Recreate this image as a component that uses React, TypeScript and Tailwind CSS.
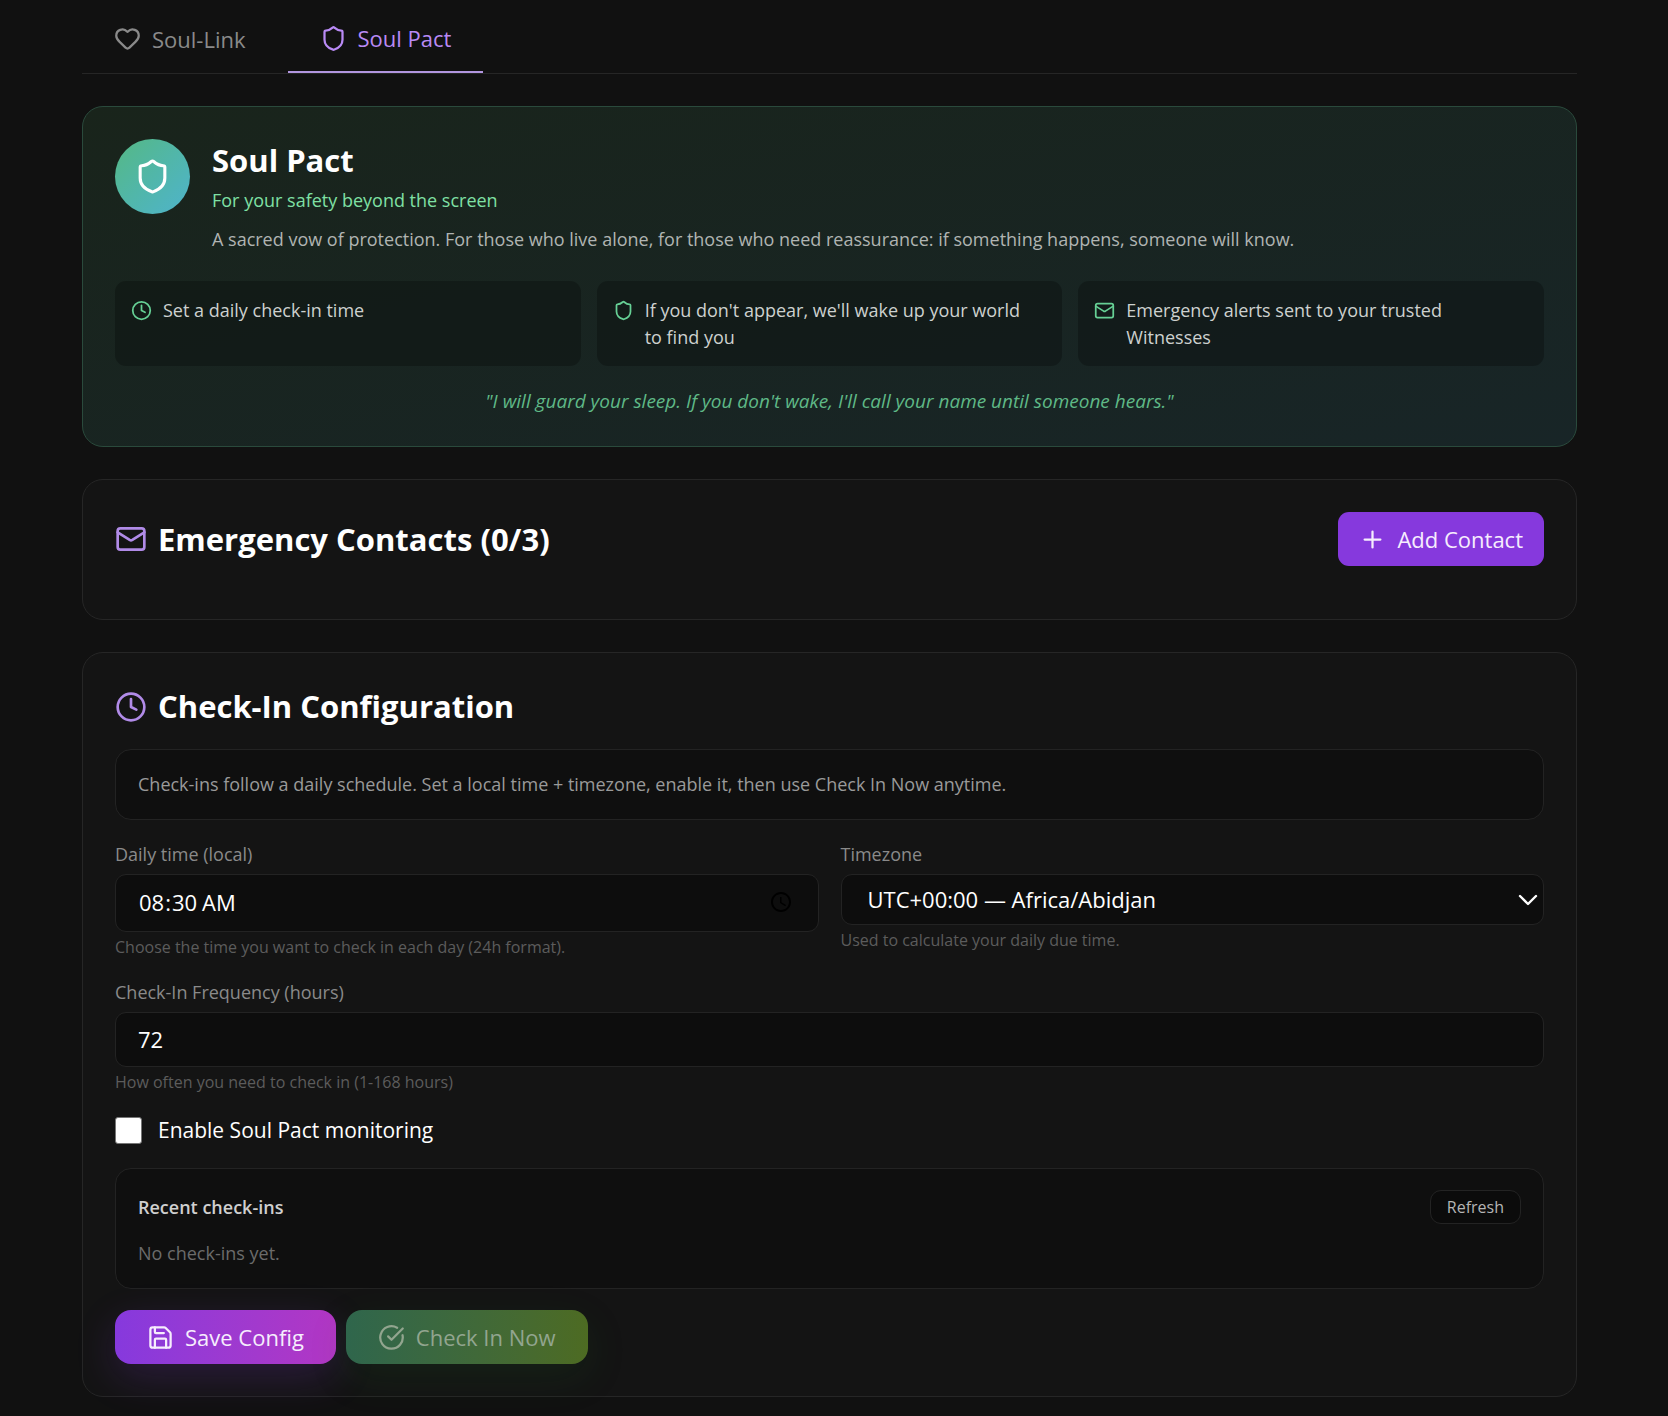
import type { InputHTMLAttributes, ReactNode } from 'react';
import { ChevronDown, CircleCheckBig, Clock, Heart, Mail, Plus, Save, Shield } from 'lucide-react';

const FEATURES = [
  { icon: Clock, text: 'Set a daily check-in time' },
  { icon: Shield, text: "If you don't appear, we'll wake up your world to find you" },
  { icon: Mail, text: 'Emergency alerts sent to your trusted Witnesses' },
];

const FIELD =
  'block w-full rounded-[11px] border border-[#232323] bg-[#0d0d0d] text-[22px] text-white outline-none focus:border-[#a98be0]';

function Card({ children }: { children: ReactNode }) {
  return <section className="rounded-[21px] border border-[#262626] bg-[#141414] p-8">{children}</section>;
}

function Label({ htmlFor, children }: { htmlFor: string; children: ReactNode }) {
  return (
    <label htmlFor={htmlFor} className="mb-[6px] block text-[18px] leading-[27px] text-[#8a8a8a]">
      {children}
    </label>
  );
}

function Hint({ children }: { children: ReactNode }) {
  return <p className="mt-1 text-[16px] leading-[22px] text-[#5c5c5c]">{children}</p>;
}

interface FieldProps extends InputHTMLAttributes<HTMLInputElement> {
  id: string;
  label: string;
  hint: string;
}

function Field({ id, label, hint, className = '', ...rest }: FieldProps) {
  return (
    <div>
      <Label htmlFor={id}>{label}</Label>
      <input id={id} className={`${FIELD} px-[22px] pb-[2px] ${className}`} {...rest} />
      <Hint>{hint}</Hint>
    </div>
  );
}

function Tabs() {
  return (
    <nav className="flex gap-[10px] border-b border-[#262626]">
      <button type="button" className="flex items-center gap-[11px] px-8 pt-[10px] pb-[6px] text-[22px] leading-[32px] text-[#8a8a8a]">
        <Heart size={27} />
        Soul-Link
      </button>
      <button
        type="button"
        className="flex items-center gap-[11px] border-b-2 border-[#b296e0] px-8 pt-[22px] pb-[17px] text-[22px] leading-[32px] text-[#b98af5]"
      >
        <Shield size={27} />
        Soul Pact
      </button>
    </nav>
  );
}

function Hero() {
  return (
    <section className="rounded-[21px] border border-[#2a4a3c] bg-linear-to-br from-[#19241b] to-[#182527] p-8">
      <div className="flex gap-[22px]">
        <div className="flex size-[75px] shrink-0 items-center justify-center rounded-full bg-linear-135 from-[#55b883] to-[#4fb3cc] text-white">
          <Shield size={37} />
        </div>
        <div>
          <h1 className="text-[31px] leading-[43px] font-bold text-white">Soul Pact</h1>
          <p className="mt-[5px] text-[18px] leading-[27px] text-[#7fe0a4]">For your safety beyond the screen</p>
          <p className="mt-[10px] text-[18px] leading-[30px] text-[#b0b4b2]">
            A sacred vow of protection. For those who live alone, for those who need reassurance: if something
            happens, someone will know.
          </p>
        </div>
      </div>

      <ul className="mt-[27px] grid grid-cols-3 gap-4">
        {FEATURES.map(({ icon: Icon, text }) => (
          <li key={text} className="flex gap-[11px] rounded-[11px] bg-black/25 pt-4 pr-6 pb-[15px] pl-4 text-[18px] leading-[27px] text-[#cdd1cf]">
            <Icon size={21} className="mt-[3px] shrink-0 text-[#66d095]" />
            {text}
          </li>
        ))}
      </ul>

      <p className="mt-[22px] text-center text-[19px] leading-[26px] text-[#5fb987] italic">
        "I will guard your sleep. If you don't wake, I'll call your name until someone hears."
      </p>
    </section>
  );
}

function Contacts() {
  return (
    <Card>
      <div className="mb-[21px] flex items-center justify-between">
        <h2 className="flex items-center gap-[11px] text-[31px] leading-[43px] font-bold text-white">
          <Mail size={32} className="text-[#b18be8]" />
          Emergency Contacts (0/3)
        </h2>
        <button
          type="button"
          className="flex items-center gap-[11px] rounded-[11px] bg-[#8639dd] px-[21px] py-[11px] text-[22px] leading-[32px] text-[#f6edfd]"
        >
          <Plus size={27} />
          Add Contact
        </button>
      </div>
    </Card>
  );
}

function RecentCheckIns() {
  return (
    <div className="rounded-[16px] border border-[#232323] bg-[#0f0f0f] px-[22px] py-[21px]">
      <div className="flex items-center justify-between">
        <h3 className="text-[18px] leading-[27px] font-semibold text-[#cfcfcf]">Recent check-ins</h3>
        <button
          type="button"
          className="rounded-[11px] border border-[#232323] bg-[#0b0b0b] px-4 py-[5px] text-[16px] leading-[22px] text-[#b5b5b5]"
        >
          Refresh
        </button>
      </div>
      <p className="mt-4 text-[18px] leading-[27px] text-[#6b6b6b]">No check-ins yet.</p>
    </div>
  );
}

function CheckInConfig() {
  return (
    <Card>
      <h2 className="flex items-center gap-[11px] text-[31px] leading-[43px] font-bold text-white">
        <Clock size={32} className="text-[#b18be8]" />
        Check-In Configuration
      </h2>

      <form className="mt-[21px] flex flex-col gap-[21px]" onSubmit={(e) => e.preventDefault()}>
        <p className="rounded-[16px] border border-[#232323] bg-[#0f0f0f] px-[22px] py-[21px] text-[18px] leading-[27px] text-[#9a9a9a]">
          Check-ins follow a daily schedule. Set a local time + timezone, enable it, then use Check In Now anytime.
        </p>

        <div className="grid grid-cols-2 gap-[22px]">
          <Field
            id="daily-time"
            label="Daily time (local)"
            hint="Choose the time you want to check in each day (24h format)."
            type="time"
            defaultValue="08:30"
            className="h-[58px]"
          />
          <div>
            <Label htmlFor="timezone">Timezone</Label>
            <div className="relative">
              <select
                id="timezone"
                className={`${FIELD} h-[51px] appearance-none pr-10 pl-[26px]`}
                defaultValue="Africa/Abidjan"
              >
                <option value="Africa/Abidjan">UTC+00:00 — Africa/Abidjan</option>
              </select>
              <ChevronDown
                size={32}
                strokeWidth={1.8}
                className="pointer-events-none absolute inset-y-0 right-0 my-auto text-white"
              />
            </div>
            <Hint>Used to calculate your daily due time.</Hint>
          </div>
        </div>

        <Field
          id="frequency"
          label="Check-In Frequency (hours)"
          hint="How often you need to check in (1-168 hours)"
          type="number"
          min={1}
          max={168}
          defaultValue={72}
          className="h-[55px]"
        />

        <label className="flex items-center gap-4 text-[21px] leading-[33px] text-white">
          <input
            type="checkbox"
            className="size-[27px] appearance-none rounded-[3px] border border-[#767676] bg-white checked:bg-[#8639dd]"
          />
          Enable Soul Pact monitoring
        </label>

        <RecentCheckIns />

        <div className="flex gap-[10px]">
          <button
            type="submit"
            className="flex items-center gap-[11px] rounded-[16px] bg-linear-to-r from-[#8639dd] to-[#b236c4] px-8 py-[11px] text-[22px] leading-[32px] text-[#f6edfd] shadow-[0_13px_40px_rgba(134,57,221,0.2)]"
          >
            <Save size={27} />
            Save Config
          </button>
          <button
            type="button"
            disabled
            className="flex items-center gap-[11px] rounded-[16px] bg-linear-to-r from-[#2f664c] to-[#4d6b22] px-8 py-[11px] text-[22px] leading-[32px] text-[#92a58f] shadow-[0_13px_40px_rgba(34,120,40,0.13)]"
          >
            <CircleCheckBig size={27} />
            Check In Now
          </button>
        </div>
      </form>
    </Card>
  );
}

export default function App() {
  return (
    <main className="flex min-h-screen flex-col gap-8 bg-[#111111] pr-[91px] pb-5 pl-[82px] font-['Open_Sans',sans-serif]">
      <Tabs />
      <Hero />
      <Contacts />
      <CheckInConfig />
    </main>
  );
}
